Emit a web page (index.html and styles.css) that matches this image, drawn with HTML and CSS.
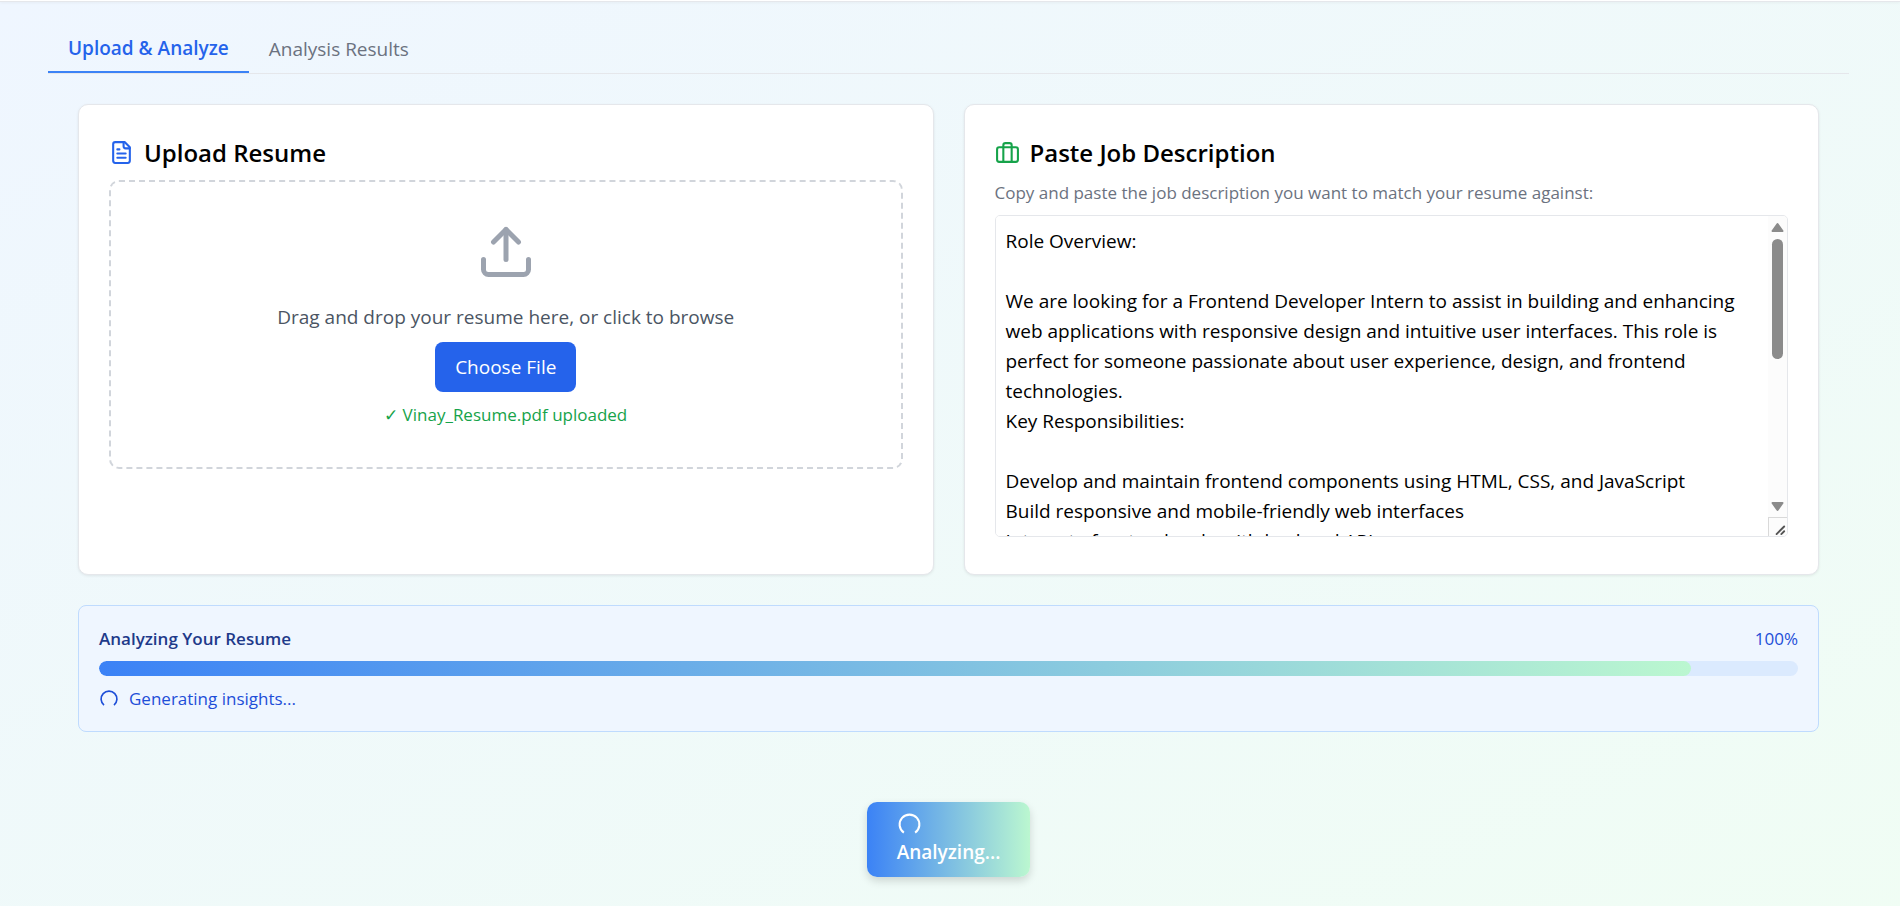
FILE: index.html
```html
<!DOCTYPE html>
<html lang="en">
<head>
<meta charset="utf-8">
<meta name="viewport" content="width=device-width, initial-scale=1">
<title>Resume Analyzer</title>
<link rel="stylesheet" href="styles.css">
</head>
<body>
<header class="topbar"></header>
<main class="page">
  <nav class="tabs" role="tablist">
    <button class="tab tab-active" type="button" role="tab" aria-selected="true">Upload &amp; Analyze</button>
    <button class="tab" type="button" role="tab" aria-selected="false">Analysis Results</button>
  </nav>
  <div class="content">
    <div class="cards">
      <section class="card">
        <h2 class="card-title">
          <svg class="icon icon-blue" viewBox="0 0 24 24" aria-hidden="true"><path d="M15 2H6a2 2 0 0 0-2 2v16a2 2 0 0 0 2 2h12a2 2 0 0 0 2-2V7Z"/><path d="M14 2v4a2 2 0 0 0 2 2h4"/><path d="M10 9H8"/><path d="M16 13H8"/><path d="M16 17H8"/></svg>
          Upload Resume
        </h2>
        <div class="dropzone">
          <svg class="upload-icon" viewBox="0 0 24 24" aria-hidden="true"><path d="M21 15v4a2 2 0 0 1-2 2H5a2 2 0 0 1-2-2v-4"/><polyline points="17 8 12 3 7 8"/><line x1="12" x2="12" y1="3" y2="15"/></svg>
          <p class="drop-text">Drag and drop your resume here, or click to browse</p>
          <button class="choose" type="button">Choose File</button>
          <p class="uploaded">✓ Vinay_Resume.pdf uploaded</p>
        </div>
      </section>
      <section class="card">
        <h2 class="card-title">
          <svg class="icon icon-green" viewBox="0 0 24 24" aria-hidden="true"><rect width="20" height="14" x="2" y="7" rx="2"/><path d="M16 21V5a2 2 0 0 0-2-2h-4a2 2 0 0 0-2 2v16"/></svg>
          Paste Job Description
        </h2>
        <label class="hint" for="job">Copy and paste the job description you want to match your resume against:</label>
        <div class="job-box">
          <textarea class="job" id="job">Role Overview:

We are looking for a Frontend Developer Intern to assist in building and enhancing web applications with responsive design and intuitive user interfaces. This role is perfect for someone passionate about user experience, design, and frontend technologies.
Key Responsibilities:

Develop and maintain frontend components using HTML, CSS, and JavaScript
Build responsive and mobile-friendly web interfaces
Integrate frontend code with backend APIs</textarea>
          <div class="scrollbar" aria-hidden="true">
            <svg class="arrow" viewBox="0 0 19 19"><path d="M9.500 8L14.500 15H4.500z"/></svg>
            <div class="rail"><div class="thumb"></div></div>
            <svg class="arrow" viewBox="0 0 19 19"><path d="M9.500 12L14.500 5H4.500z"/></svg>
            <svg class="grip" viewBox="0 0 19 19"><path d="M8 17L16 9M13 17L16 14"/></svg>
          </div>
        </div>
      </section>
    </div>
    <section class="progress-panel">
      <div class="progress-head">
        <h3 class="progress-title">Analyzing Your Resume</h3>
        <span class="progress-value">100%</span>
      </div>
      <div class="track"><div class="fill" style="width:93.7%"></div></div>
      <div class="status">
        <svg class="spinner" viewBox="0 0 24 24" aria-hidden="true"><path d="M6 19.4A9.5 9.5 0 1 1 18 19.4"/></svg>
        <span>Generating insights...</span>
      </div>
    </section>
    <button class="analyze" type="button">
      <svg class="spinner-large" viewBox="0 0 24 24" aria-hidden="true"><path d="M6.6 19.8A9.5 9.5 0 1 1 17.4 19.8"/></svg>
      <span>Analyzing...</span>
    </button>
  </div>
</main>
</body>
</html>
```
FILE: styles.css
```css
* {
  box-sizing: border-box;
}

body {
  margin: 0;
  min-height: 100vh;
  background: linear-gradient(to bottom right, #eff6ff, #f0fdf4);
  color: #000;
  font: 19px/30px "Open Sans", "Noto Sans", sans-serif;
}

h2, h3, p {
  margin: 0;
}

button {
  border: 0;
  background: none;
  font: inherit;
  cursor: pointer;
}

svg {
  fill: none;
  stroke: currentColor;
  stroke-width: 2;
  stroke-linecap: round;
  stroke-linejoin: round;
}

.topbar {
  height: 2px;
  background: #fff;
  border-bottom: 1px solid #e5e7eb;
  box-shadow: 0 1px 3px rgba(0, 0, 0, 0.05);
}

.page {
  padding: 23px 51px 29px 48px;
}

.tabs {
  display: flex;
  align-items: center;
  border-bottom: 1px solid #e5e7eb;
}

.tab {
  padding: 8px 20px;
  color: #6b7280;
}

.tab-active {
  color: #2563eb;
  font-weight: 600;
  border-bottom: 2px solid #3b82f6;
}

.content {
  padding: 30px;
}

.cards {
  display: grid;
  grid-template-columns: 1fr 1fr;
  gap: 30px;
}

.card {
  display: flex;
  flex-direction: column;
  padding: 30px 30px 37px;
  background: #fff;
  border: 1px solid #e5e7eb;
  border-radius: 10px;
  box-shadow: 0 1px 3px rgba(0, 0, 0, 0.08);
}

.card-title {
  display: flex;
  align-items: center;
  gap: 10px;
  margin-bottom: 10px;
  font-size: 24px;
  line-height: 35px;
  font-weight: 600;
}

.icon {
  width: 25px;
  height: 25px;
}

.icon-blue {
  color: #2563eb;
}

.icon-green {
  color: #16a34a;
}

.dropzone {
  display: flex;
  flex-direction: column;
  align-items: center;
  padding: 40px;
  border: 2px dashed #d1d5db;
  border-radius: 10px;
}

.upload-icon {
  width: 60px;
  height: 60px;
  margin-bottom: 20px;
  color: #9ca3af;
}

.drop-text {
  color: #4b5563;
}

.choose {
  margin: 10px 0;
  padding: 10px 20px;
  border-radius: 8px;
  background: #2563eb;
  color: #fff;
}

.uploaded {
  font-size: 17px;
  line-height: 25px;
  color: #16a34a;
}

.hint {
  margin-bottom: 10px;
  font-size: 17px;
  line-height: 25px;
  color: #6b7280;
}

.job-box {
  display: flex;
  height: 322px;
  border: 1px solid #e5e7eb;
  border-radius: 5px;
  overflow: hidden;
}

.job {
  flex: 1;
  min-width: 0;
  padding: 10px;
  border: 0;
  background: #fff;
  color: #000;
  font: inherit;
  resize: none;
}

.scrollbar {
  display: flex;
  flex-direction: column;
  width: 19px;
  background: #fcfcfc;
}

.arrow {
  width: 19px;
  height: 19px;
  fill: #8b8b8b;
  stroke: #8b8b8b;
}

.rail {
  flex: 1;
  padding: 4px;
}

.thumb {
  height: 120px;
  border-radius: 6px;
  background: #8b8b8b;
}

.grip {
  width: 19px;
  height: 19px;
  border: solid #d9d9d9;
  border-width: 1px 0 0 1px;
  color: #555;
}

.progress-panel {
  margin-top: 30px;
  padding: 20px;
  border: 1px solid #bfdbfe;
  border-radius: 8px;
  background: #eff6ff;
  font-size: 17px;
  line-height: 25px;
  color: #1d4ed8;
}

.progress-head {
  display: flex;
  justify-content: space-between;
}

.progress-title {
  font-size: 17px;
  font-weight: 600;
  color: #1e3a8a;
}

.track {
  height: 15px;
  margin: 10px 0;
  border-radius: 8px;
  background: #dbeafe;
  overflow: hidden;
}

.fill {
  height: 100%;
  border-radius: 8px;
  background: linear-gradient(to right, #3b82f6, #bbf7d0);
}

.status {
  display: flex;
  align-items: center;
  gap: 10px;
}

.spinner {
  width: 20px;
  height: 20px;
  stroke-linecap: butt;
}

.analyze {
  display: flex;
  flex-direction: column;
  margin: 70px auto 0;
  padding: 10px 30px;
  border-radius: 10px;
  background: linear-gradient(to right, #3b82f6, #bbf7d0);
  box-shadow: 0 4px 8px rgba(0, 0, 0, 0.15);
  color: #fff;
  font-weight: 600;
}

.spinner-large {
  width: 25px;
  height: 25px;
  stroke-linecap: butt;
}
```
